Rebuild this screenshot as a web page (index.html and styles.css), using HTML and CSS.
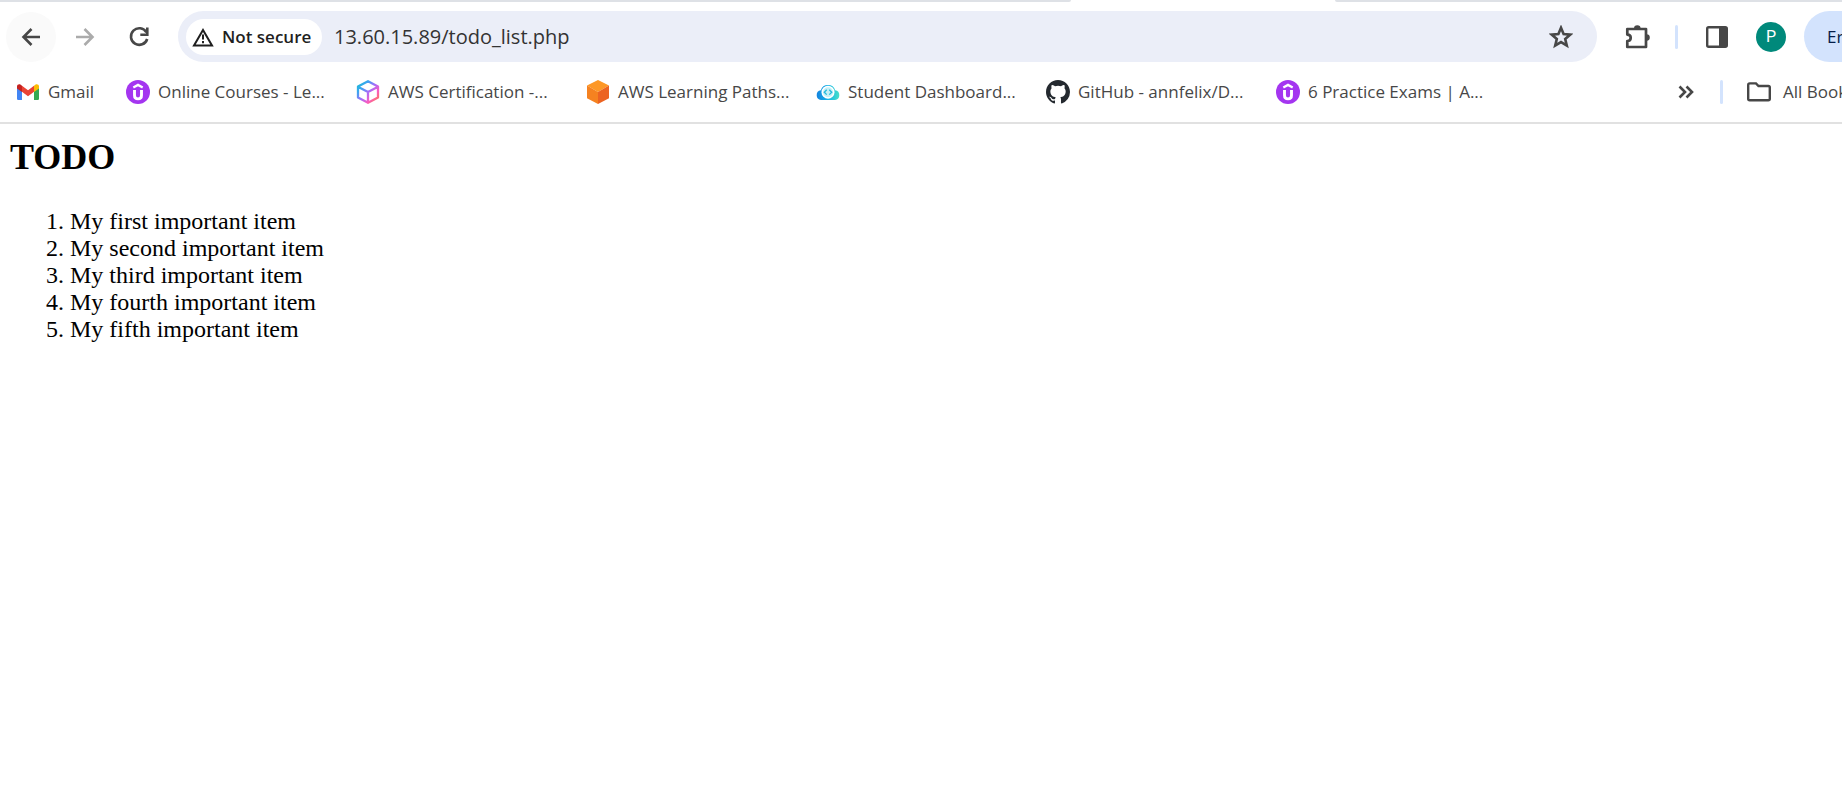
FILE: index.html
```html
<!DOCTYPE html>
<html lang="en">
<head>
<meta charset="utf-8">
<meta name="viewport" content="width=device-width, initial-scale=1">
<title>TODO</title>
<link rel="stylesheet" href="styles.css">
</head>
<body>
<svg class="defs" aria-hidden="true">
  <symbol id="udemy" viewBox="0 0 24 24">
    <circle cx="12" cy="12" r="12" fill="#a435f0"/>
    <path d="M7.3 7.600 12 4.900l4.700 2.700" fill="none" stroke="#fff" stroke-width="2.300"/>
    <path d="M8.500 10v5.200c0 2.500 1.300 3.700 3.500 3.700s3.500-1.200 3.500-3.700V10" fill="none" stroke="#fff" stroke-width="2.900"/>
  </symbol>
</svg>
<header class="browser">
  <div class="tabstrip"><span class="tab-edge tab-edge-left"></span><span class="tab-active"></span><span class="tab-edge tab-edge-right"></span></div>
  <div class="toolbar">
    <button class="nav nav-hover" aria-label="Back"><svg class="icon" viewBox="0 0 24 24"><path d="M21 12H5M12.500 4 4.500 12l8 8" fill="none" stroke="#474747" stroke-width="2.600"/></svg></button>
    <button class="nav" aria-label="Forward"><svg class="icon" viewBox="0 0 24 24"><path d="M3 12h16M11.500 4l8 8-8 8" fill="none" stroke="#ababab" stroke-width="2.600"/></svg></button>
    <button class="nav" aria-label="Reload"><svg class="icon" viewBox="0 0 24 24"><path d="M19.400 7.300A8.300 8.300 0 1 0 20.200 14" fill="none" stroke="#474747" stroke-width="2.600"/><path d="M20.300 2.600v7.200h-7" fill="none" stroke="#474747" stroke-width="2.600"/></svg></button>
    <div class="omnibox">
      <button class="chip"><svg class="chip-icon" viewBox="0 0 22 20"><path d="M11 3 20 18.400H2Z" fill="none" stroke="#1f1f1f" stroke-width="2"/><path d="M11 7.600v5M11 14v2.200" stroke="#1f1f1f" stroke-width="2"/></svg>Not secure</button>
      <input class="url" type="text" aria-label="Address" value="13.60.15.89/todo_list.php">
      <button class="star" aria-label="Bookmark this page"><svg class="icon" viewBox="0 0 24 24"><path d="m12 2.800 2.600 6.200 6.700.6-5.100 4.400 1.600 6.600-5.800-3.500-5.800 3.500L7.800 14 2.700 9.600l6.700-.6Z" fill="none" stroke="#474747" stroke-width="2.600"/></svg></button>
    </div>
    <button class="tool" aria-label="Extensions"><svg class="icon-lg" viewBox="0 0 26 26"><path d="M4 5h18v5.500M22 16.500V23H3.300v-6c2.200 0 3.400-1.400 3.400-3.200 0-1.900-1.200-3.200-3.400-3.200V5h2M22 10v7" fill="none" stroke="#474747" stroke-width="2.700" stroke-linejoin="round"/><path d="M10 4.500a3.300 3.300 0 0 1 6.600 0ZM22.500 10.300a3.300 3.300 0 0 1 0 6.600Z" fill="#474747"/></svg></button>
    <span class="divider divider-tools"></span>
    <button class="tool" aria-label="Side panel"><svg class="icon" viewBox="0 0 24 24"><rect x="2.200" y="2.200" width="19.600" height="19.600" rx="1.500" fill="none" stroke="#474747" stroke-width="2.400"/><path d="M14 2h8v20h-8z" fill="#474747"/></svg></button>
    <button class="avatar" aria-label="Profile">P</button>
    <button class="pill">Error</button>
  </div>
  <nav class="bookmarks" aria-label="Bookmarks">
    <a class="bookmark" href="#"><svg class="icon" viewBox="0 0 24 24"><path d="M1 6v12.800q0 1.200 1.200 1.200H6V10Z" fill="#4285f4"/><path d="M23 6v12.800q0 1.200-1.200 1.200H18V10Z" fill="#34a853"/><path d="M6 5.700v6.100l6 4.400 6-4.400V5.700l-6 4.500Z" fill="#ea4335"/><path d="M1 6.500v1.900l5 3.500V5.700l-1.300-1C3.200 3.600 1 4.500 1 6.500Z" fill="#c5221f"/><path d="M23 6.500v1.900l-5 3.500V5.700l1.300-1C20.800 3.600 23 4.500 23 6.500Z" fill="#fbbc04"/></svg><span class="label-short">Gmail</span></a>
    <a class="bookmark" href="#"><svg class="icon"><use href="#udemy"/></svg><span class="label">Online Courses - Le...</span></a>
    <a class="bookmark" href="#"><svg class="icon" viewBox="0 0 24 24"><defs><linearGradient id="cube" x1="0" y1="0" x2="1" y2="1"><stop offset="0" stop-color="#16bfd0"/><stop offset=".25" stop-color="#3ba5f0"/><stop offset=".5" stop-color="#a66bfa"/><stop offset=".72" stop-color="#f95bc3"/><stop offset="1" stop-color="#ff7d42"/></linearGradient></defs><path d="M12 1.200 22 6.600v10.800L12 22.800 2 17.400V6.600ZM2.400 7l9.600 5 9.600-5M12 12v10.500" fill="none" stroke="url(#cube)" stroke-width="2.300" stroke-linejoin="round"/></svg><span class="label">AWS Certification -...</span></a>
    <a class="bookmark" href="#"><svg class="icon" viewBox="0 0 24 24"><path d="m12 0 11 5.600L12 12 1 5.600Z" fill="#fd9827"/><path d="M1 5.600 12 12v12L1 18.200Z" fill="#f58220"/><path d="M23 5.600 12 12v12l11-5.800Z" fill="#ec6322"/></svg><span class="label">AWS Learning Paths...</span></a>
    <a class="bookmark" href="#"><svg class="icon" viewBox="0 0 24 24"><defs><linearGradient id="cloud"><stop offset="0" stop-color="#1583df"/><stop offset=".5" stop-color="#14b4e8"/><stop offset="1" stop-color="#48dfc8"/></linearGradient></defs><path d="M5 20a4.900 4.900 0 0 1-.2-9.700 7.500 7.500 0 0 1 14.400 0A4.900 4.900 0 0 1 19 20Z" fill="url(#cloud)"/><circle cx="12" cy="12.200" r="6.500" fill="#fff"/><circle cx="12" cy="12.200" r="5" fill="#c4f0f6"/><path d="m10.700 9.800-2.400 2.400 2.400 2.400M13.300 9.800l2.400 2.400-2.400 2.400" fill="none" stroke="#22b8dc" stroke-width="1.300"/></svg><span class="label">Student Dashboard...</span></a>
    <a class="bookmark" href="#"><svg class="icon" viewBox="0 0 16 16"><path fill="#24292f" d="M8 0C3.580 0 0 3.580 0 8c0 3.540 2.290 6.530 5.470 7.590.4.070.55-.17.55-.38 0-.19-.01-.82-.01-1.490-2.010.37-2.530-.49-2.690-.94-.09-.23-.48-.94-.82-1.130-.28-.15-.68-.52-.01-.53.63-.01 1.080.58 1.230.82.72 1.210 1.870.87 2.330.66.07-.52.28-.87.51-1.070-1.780-.2-3.640-.89-3.640-3.950 0-.87.31-1.590.82-2.150-.08-.2-.36-1.020.08-2.120 0 0 .67-.21 2.200.82a7.600 7.600 0 0 1 4 0c1.530-1.040 2.200-.82 2.200-.82.44 1.100.16 1.920.08 2.120.51.56.82 1.270.82 2.150 0 3.070-1.870 3.750-3.650 3.950.29.25.54.73.54 1.480 0 1.070-.01 1.930-.01 2.200 0 .21.15.46.55.38A8 8 0 0 0 16 8c0-4.420-3.580-8-8-8Z"/></svg><span class="label">GitHub - annfelix/D...</span></a>
    <a class="bookmark" href="#"><svg class="icon"><use href="#udemy"/></svg><span class="label">6 Practice Exams | A...</span></a>
    <button class="more" aria-label="More bookmarks"><svg class="icon" viewBox="0 0 24 24"><path d="m5.500 6.500 5.500 5.500-5.500 5.500M12.500 6.500 18 12l-5.500 5.500" fill="none" stroke="#474747" stroke-width="2.600"/></svg></button>
    <span class="divider"></span>
    <a class="bookmark all" href="#"><svg class="icon" viewBox="0 0 24 24"><path d="M1.200 5q0-1.600 1.500-1.600H9L11.500 6h9.800q1.500 0 1.500 1.600v11.200q0 1.500-1.500 1.500H2.700q-1.500 0-1.500-1.500Z" fill="none" stroke="#474747" stroke-width="2.400"/></svg><span>All Bookmarks</span></a>
  </nav>
</header>
<main class="page">
  <h1>TODO</h1>
  <ol>
    <li>My first important item</li>
    <li>My second important item</li>
    <li>My third important item</li>
    <li>My fourth important item</li>
    <li>My fifth important item</li>
  </ol>
</main>
</body>
</html>
```
FILE: styles.css
```css
* { box-sizing: border-box; }
body { margin: 0; background: #fff; overflow-x: hidden; }
button { border: 0; padding: 0; background: none; color: inherit; font: inherit; white-space: nowrap; }
svg { display: block; flex: none; }
.defs { position: absolute; width: 0; height: 0; }

.browser {
  overflow: hidden;
  border-bottom: 2px solid #e1e1e1;
  color: #474747;
  font: 17px/24px "Open Sans", "Noto Sans", sans-serif;
}
.tabstrip { display: flex; height: 2px; }
.tab-edge { background: #dee1e6; }
.tab-edge-left { flex: 1071; border-radius: 0 0 4px 0; }
.tab-active { flex: 264; }
.tab-edge-right { flex: 507; border-radius: 0 0 0 4px; }

.toolbar { display: flex; align-items: center; height: 69px; padding-left: 6px; }
.icon { width: 24px; height: 24px; }
.icon-lg { width: 26px; height: 26px; }
.nav {
  display: grid;
  place-items: center;
  flex: none;
  width: 50px;
  height: 50px;
  margin-right: 4px;
  border-radius: 50%;
}
.nav-hover { background: #fafafa; }
.omnibox {
  display: flex;
  align-items: center;
  flex: 1;
  min-width: 0;
  height: 51px;
  margin: 0 27px 0 10px;
  padding: 0 24px 0 8px;
  border-radius: 26px;
  background: #ebeef8;
}
.chip {
  display: flex;
  align-items: center;
  gap: 8px;
  flex: none;
  width: 136px;
  height: 36px;
  padding-left: 6px;
  border-radius: 18px;
  background: #fff;
  color: #1f1f1f;
  font-weight: 600;
}
.chip-icon { width: 22px; height: 20px; }
.url {
  flex: 1;
  min-width: 0;
  margin: 0 12px;
  padding: 0;
  border: 0;
  outline: 0;
  background: none;
  color: #333;
  font: 20px/28px "Open Sans", "Noto Sans", sans-serif;
}
.tool { flex: none; }
.divider { flex: none; width: 3px; height: 24px; border-radius: 2px; background: #d3e3fd; }
.divider-tools { margin: 0 27px 0 25px; }
.avatar {
  flex: none;
  width: 30px;
  height: 30px;
  margin: 0 18px 0 27px;
  border-radius: 50%;
  background: #00897b;
  color: #fff;
  font: 16px/30px Roboto, sans-serif;
}
.pill {
  flex: none;
  width: 38px;
  height: 51px;
  padding-left: 23px;
  overflow: hidden;
  border-radius: 26px 0 0 26px;
  background: #d3e3fd;
  color: #041e49;
  text-align: left;
}

.bookmarks { display: flex; align-items: center; height: 51px; padding: 0 0 10px 16px; }
.bookmark {
  display: flex;
  align-items: center;
  gap: 8px;
  flex: none;
  margin-right: 30px;
  color: inherit;
  text-decoration: none;
  white-space: nowrap;
}
.label { width: 168px; }
.label-short { width: 48px; }
.more { margin: 0 22px 0 auto; }
.all { width: 95px; margin: 0 0 0 24px; gap: 12px; overflow: hidden; }

.page {
  padding: 0 10px;
  color: #000;
  font: 24px/27px "Liberation Serif", "Times New Roman", serif;
}
h1 { margin: 0; padding-top: 12px; font-size: 36px; line-height: 42px; }
ol { margin: 0; padding: 30px 0 0 60px; }
```
